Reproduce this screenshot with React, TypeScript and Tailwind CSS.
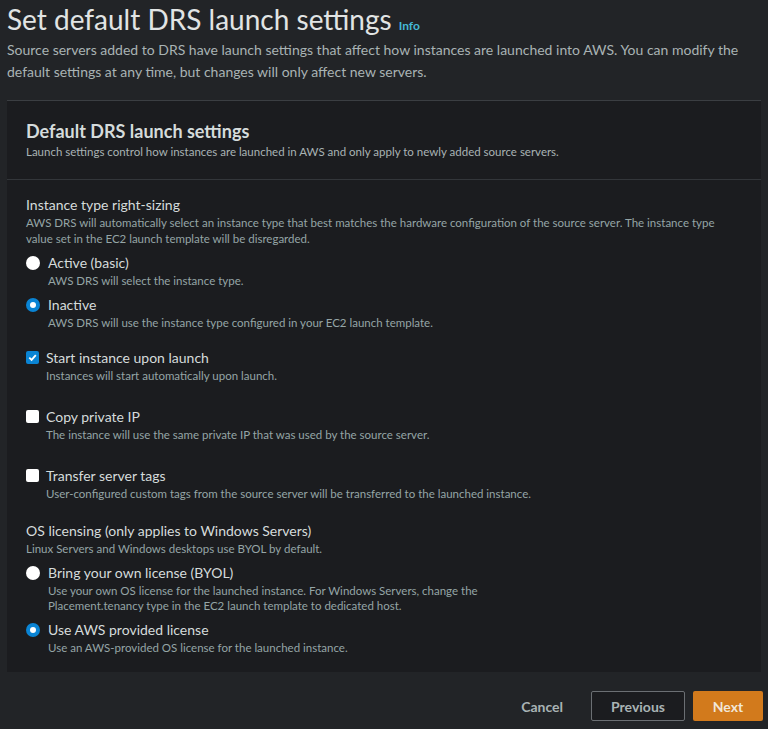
import React from 'react';

const font = { fontFamily: 'Lato, "Open Sans", sans-serif' };

function Radio({ checked }: { checked: boolean }) {
    return checked ? (
        <span className="mt-[3px] flex h-[14px] w-[14px] flex-shrink-0 items-center justify-center rounded-full bg-[#0a84d4]">
            <span className="block h-[6px] w-[6px] rounded-full bg-white" />
        </span>
    ) : (
        <span className="mt-[3px] block h-[14px] w-[14px] flex-shrink-0 rounded-full bg-white" />
    );
}

function Checkbox({ checked }: { checked: boolean }) {
    return checked ? (
        <span className="mt-[3px] flex h-[13px] w-[13px] flex-shrink-0 items-center justify-center rounded-[2px] bg-[#0a84d4]">
            <svg viewBox="0 0 12 12" className="h-[11px] w-[11px]" fill="none" stroke="white" strokeWidth="2">
                <path d="M2.5 6.2 5 8.6 9.6 3.4" />
            </svg>
        </span>
    ) : (
        <span className="mt-[3px] block h-[13px] w-[13px] flex-shrink-0 rounded-[2px] bg-white" />
    );
}

function Option({
    control,
    label,
    desc,
    gap,
}: {
    control: React.ReactNode;
    label: string;
    desc: React.ReactNode;
    gap: string;
}) {
    return (
        <div className="flex items-start">
            <div className={gap}>{control}</div>
            <div>
                <div className="text-[14px] leading-[20px] text-[#d5dbdb]">{label}</div>
                <div className="text-[11.5px] leading-[15px] text-[#95a5a6]">{desc}</div>
            </div>
        </div>
    );
}

export default function App() {
    return (
        <div className="min-h-[729px] w-[768px] bg-[#222427]" style={font}>
            {/* Header */}
            <div className="px-[7px] pt-[1px]">
                <div className="flex items-baseline gap-[7px]">
                    <h1 className="text-[28px] leading-[36px] text-[#e1e4e4]">Set default DRS launch settings</h1>
                    <span className="text-[12px] font-bold text-[#44b9d6]">Info</span>
                </div>
                <p className="mt-[2px] text-[14px] leading-[22px] text-[#a9b3b4]">
                    Source servers added to DRS have launch settings that affect how instances are launched into AWS. You can modify the
                    default settings at any time, but changes will only affect new servers.
                </p>
            </div>

            {/* Panel */}
            <div className="mx-[7px] mt-[17px] border-t border-[#3b3e42] bg-[#1b1c1f]">
                <div className="border-b border-[#33363a] px-[19px] pb-[19px] pt-[18px]">
                    <h2 className="text-[18px] font-bold leading-[24px] text-[#d5dbdb]">Default DRS launch settings</h2>
                    <p className="mt-[1px] text-[11.5px] leading-[16px] text-[#a9b3b4]">
                        Launch settings control how instances are launched in AWS and only apply to newly added source servers.
                    </p>
                </div>

                <div className="px-[19px] pb-[17px] pt-[15px]">
                    <div className="text-[14px] leading-[20px] text-[#d5dbdb]">Instance type right-sizing</div>
                    <p className="text-[11.5px] leading-[16px] text-[#95a5a6]">
                        AWS DRS will automatically select an instance type that best matches the hardware configuration of the source server. The instance type
                        value set in the EC2 launch template will be disregarded.
                    </p>

                    <div className="mt-[6px] flex flex-col gap-[7px]">
                        <Option gap="w-[22px]" control={<Radio checked={false} />} label="Active (basic)" desc="AWS DRS will select the instance type." />
                        <Option gap="w-[22px]" control={<Radio checked />} label="Inactive" desc="AWS DRS will use the instance type configured in your EC2 launch template." />
                    </div>

                    <div className="mt-[18px] flex flex-col gap-[24px]">
                        <Option gap="w-[20px]" control={<Checkbox checked />} label="Start instance upon launch" desc="Instances will start automatically upon launch." />
                        <Option gap="w-[20px]" control={<Checkbox checked={false} />} label="Copy private IP" desc="The instance will use the same private IP that was used by the source server." />
                        <Option
                            gap="w-[20px]"
                            control={<Checkbox checked={false} />}
                            label="Transfer server tags"
                            desc="User-configured custom tags from the source server will be transferred to the launched instance."
                        />
                    </div>

                    <div className="mt-[20px] text-[14px] leading-[20px] text-[#d5dbdb]">OS licensing (only applies to Windows Servers)</div>
                    <p className="text-[11.5px] leading-[16px] text-[#95a5a6]">Linux Servers and Windows desktops use BYOL by default.</p>

                    <div className="mt-[6px] flex flex-col gap-[7px]">
                        <Option
                            gap="w-[22px]"
                            control={<Radio checked={false} />}
                            label="Bring your own license (BYOL)"
                            desc={
                                <>
                                    Use your own OS license for the launched instance. For Windows Servers, change the
                                    <br />
                                    Placement.tenancy type in the EC2 launch template to dedicated host.
                                </>
                            }
                        />
                        <Option gap="w-[22px]" control={<Radio checked />} label="Use AWS provided license" desc="Use an AWS-provided OS license for the launched instance." />
                    </div>
                </div>
            </div>

            {/* Footer */}
            <div className="flex items-center justify-end gap-[8px] px-[5px] pt-[19px]">
                <button className="mr-[12px] px-[8px] text-[14px] font-bold text-[#a9b3b4]">Cancel</button>
                <button className="h-[30px] w-[94px] rounded-[2px] border border-[#6b6f73] bg-[#1b1c1f] text-[14px] font-bold text-[#a9b3b4]">
                    Previous
                </button>
                <button className="h-[30px] w-[70px] rounded-[2px] bg-[#d27a1c] text-[14px] font-bold text-[#f1e6d8]">Next</button>
            </div>
        </div>
    );
}
